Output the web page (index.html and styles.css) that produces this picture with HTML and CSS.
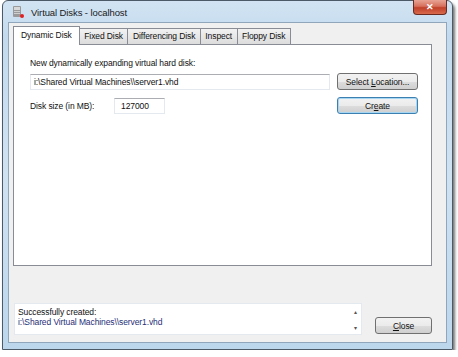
FILE: index.html
```html
<!DOCTYPE html>
<html lang="en">
<head>
    <meta charset="UTF-8">
    <title>Virtual Disks - localhost</title>
    <link rel="stylesheet" href="styles.css">
</head>
<body>
    <div class="window">
        <div class="titlebar">
            <svg class="app-icon" width="14" height="14" viewBox="0 0 14 14">
                <rect x="2" y="1" width="8" height="11" rx="1" fill="#9a9a9a"/>
                <rect x="3" y="2" width="6" height="3" fill="#d8d8d8"/>
                <rect x="3" y="6" width="6" height="1" fill="#cfcfcf"/>
                <rect x="3" y="8" width="6" height="1" fill="#cfcfcf"/>
                <circle cx="11" cy="11" r="2" fill="#e02020"/>
            </svg>
            <span class="title">Virtual Disks - localhost</span>
            <div class="close-x">&#x2715;</div>
        </div>
        <div class="client">
            <div class="tabs">
                <div class="tab selected">Dynamic Disk</div>
                <div class="tab">Fixed Disk</div>
                <div class="tab">Differencing Disk</div>
                <div class="tab">Inspect</div>
                <div class="tab">Floppy Disk</div>
            </div>
            <div class="panel">
                <div class="form">
                    <div class="label wide">New dynamically expanding virtual hard disk:</div>
                    <div class="field path">i:\Shared Virtual Machines\\server1.vhd</div>
                    <button class="btn">Select <u>L</u>ocation...</button>
                    <div class="size-row">
                        <span class="label size-label">Disk size (in MB):</span>
                        <div class="field size">127000</div>
                    </div>
                    <button class="btn default">Cr<u>e</u>ate</button>
                </div>
            </div>
            <div class="bottom">
                <div class="status">
                    <div class="status-text">
                        <div>Successfully created:</div>
                        <div class="path-line">i:\Shared Virtual Machines\\server1.vhd</div>
                    </div>
                    <div class="scroll">
                        <span>&#x25B4;</span>
                        <span>&#x25BE;</span>
                    </div>
                </div>
                <button class="btn close-btn"><u>C</u>lose</button>
            </div>
        </div>
    </div>
</body>
</html>
```

FILE: styles.css
```css
body {
    margin: 0;
    background: #fff;
    font-family: "Liberation Sans", Arial, sans-serif;
    font-size: 8.5px;
    letter-spacing: -0.1px;
    color: #111;
}
.window {
    margin-left: 2px;
    width: 451px;
    height: 350px;
    box-sizing: border-box;
    border: 1px solid #4c5a68;
    border-radius: 6px 6px 0 0;
    background: linear-gradient(180deg, #d2e4f3 0%, #c3daee 10%, #cfe2f2 50%, #bcd6ec 100%);
    padding: 0 5px 6px 5px;
    box-shadow: 2px 3px 3px rgba(0, 0, 0, 0.55);
    display: flex;
    flex-direction: column;
}
.titlebar {
    height: 21px;
    display: flex;
    align-items: center;
    position: relative;
}
.app-icon {
    margin-left: 3px;
    margin-right: 6px;
}
.title {
    font-size: 9.5px;
    letter-spacing: -0.1px;
    color: #1a1a1a;
    padding-top: 2px;
}
.close-x {
    position: absolute;
    right: 0;
    top: -1px;
    width: 34px;
    height: 15px;
    border: 1px solid #6b2a20;
    border-top: none;
    border-radius: 0 0 4px 4px;
    box-sizing: border-box;
    background: linear-gradient(180deg, #e8a394 0%, #d6705c 45%, #c0402a 55%, #d86a4c 100%);
    color: #fff;
    font-size: 9px;
    font-weight: bold;
    text-align: center;
    line-height: 14px;
    letter-spacing: 0;
}
.client {
    flex: 1;
    background: #f0f0f0;
    border: 1px solid #8fa6bb;
    padding: 3px 14px 7px 4px;
    display: flex;
    flex-direction: column;
}
.tabs {
    display: flex;
    align-items: flex-end;
    height: 18px;
    position: relative;
    z-index: 1;
}
.tab {
    height: 16px;
    line-height: 15px;
    padding: 0 4.5px;
    border: 1px solid #898c95;
    border-bottom: none;
    background: linear-gradient(180deg, #f2f2f2, #dcdcdc);
    margin-right: -1px;
    box-sizing: border-box;
}
.tab.selected {
    height: 19px;
    background: #fff;
    padding: 0 7px;
    margin-bottom: -1px;
    line-height: 17px;
}
.panel {
    height: 222px;
    box-sizing: border-box;
    background: #fff;
    border: 1px solid #898c95;
    padding: 13px 0 0 16px;
}
.form {
    display: grid;
    grid-template-columns: 300px 81px;
    column-gap: 7px;
    row-gap: 7px;
    align-items: center;
}
.label.wide {
    grid-column: 1 / 3;
    margin-bottom: -2px;
}
.field {
    height: 16px;
    box-sizing: border-box;
    border: 1px solid #e3e9ef;
    border-top-color: #abadb3;
    background: #fff;
    padding: 0 3px;
    line-height: 14px;
}
.size-row {
    display: flex;
    align-items: center;
}
.size-label {
    width: 84px;
}
.field.size {
    width: 51px;
    padding-left: 6px;
}
.btn {
    font-family: inherit;
    font-size: 8.5px;
    letter-spacing: -0.1px;
    color: #111;
    height: 17px;
    padding: 0;
    border: 1px solid #707070;
    border-radius: 3px;
    background: linear-gradient(180deg, #f2f2f2 0%, #ebebeb 50%, #dddddd 51%, #cfcfcf 100%);
}
.btn.default {
    border-color: #3c7fb1;
    box-shadow: inset 0 0 0 1px #a6d6f2;
}
.bottom {
    margin-top: 37px;
    padding-left: 1px;
    display: flex;
    align-items: flex-end;
    gap: 13px;
}
.status {
    width: 349px;
    height: 32px;
    box-sizing: border-box;
    background: #fff;
    border: 1px solid #e3e9ef;
    display: flex;
}
.status-text {
    flex: 1;
    padding: 3px 0 0 3px;
    line-height: 10px;
}
.path-line {
    color: #1f2f78;
}
.scroll {
    width: 12px;
    display: flex;
    flex-direction: column;
    justify-content: space-between;
    align-items: center;
    font-size: 6px;
    color: #555;
    padding: 4px 0 3px;
}
.close-btn {
    width: 57px;
    margin-bottom: 1px;
}
```
